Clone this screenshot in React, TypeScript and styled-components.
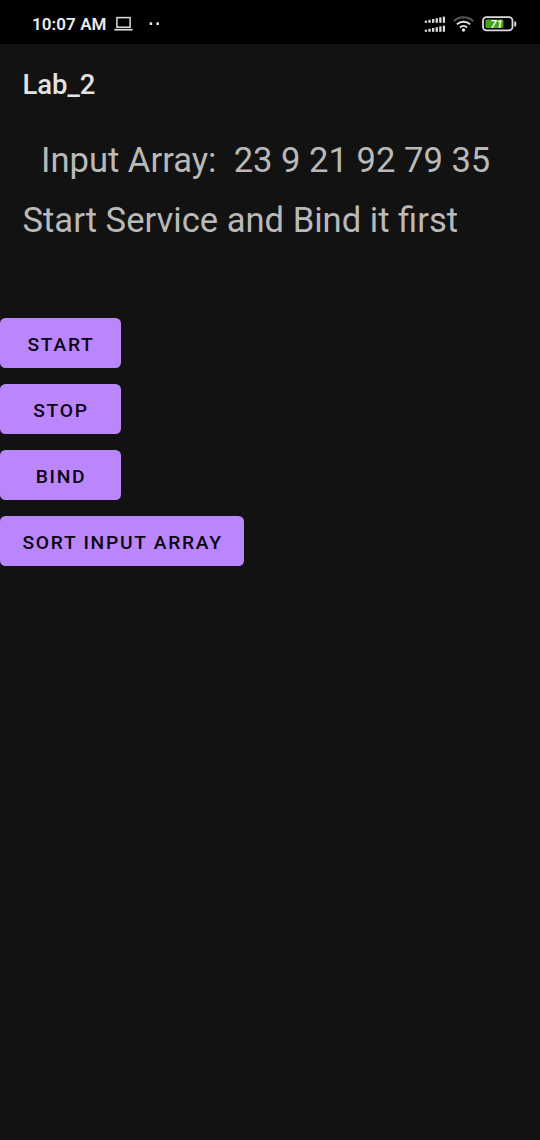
import React from "react";
import styled, { createGlobalStyle } from "styled-components";

const GlobalStyle = createGlobalStyle`
  html, body { margin: 0; background: #121212; }
  body { font-family: Roboto, sans-serif; }
`;

const Screen = styled.div`
  width: 540px;
  height: 1140px;
  overflow: hidden;
  display: flex;
  flex-direction: column;
  background: #121212;
`;

const StatusBar = styled.header`
  box-sizing: border-box;
  height: 44px;
  flex: none;
  display: flex;
  justify-content: space-between;
  padding: 0 23px 0 32px;
  background: #000;
`;

const StatusGroup = styled.div`
  display: flex;
  align-items: center;
  height: 47px;
`;

const Clock = styled.span`
  font-size: 17px;
  font-weight: 600;
  line-height: 20px;
  letter-spacing: 0.08px;
  color: #ececec;
  white-space: nowrap;
  width: 75px;
  margin-top: 1px;
`;

const Icon = styled.svg<{ $gap?: number }>`
  display: block;
  flex: none;
  margin-left: ${(p) => p.$gap ?? 0}px;
`;

const BatteryLevel = styled.text`
  font: italic 600 11px Roboto, sans-serif;
  fill: #fff;
`;

const AppBar = styled.h1`
  margin: 0;
  height: 77px;
  flex: none;
  padding-left: 22.4px;
  font-size: 27.5px;
  font-weight: 500;
  line-height: 81px;
  color: #e2e2e2;
`;

const Line = styled.p<{ $indent: number }>`
  margin: 0;
  height: 60px;
  padding-left: ${(p) => p.$indent}px;
  font-size: 34.6px;
  line-height: 79px;
  color: #b9b9b9;
  white-space: pre;
`;

const Actions = styled.main`
  display: flex;
  flex-direction: column;
  align-items: flex-start;
  gap: 16px;
  padding-top: 77px;
`;

const Button = styled.button`
  box-sizing: border-box;
  min-width: 121px;
  height: 50px;
  padding: 3px 21.5px 0 22.5px;
  border: 0;
  border-radius: 5.5px;
  background: #bb86fc;
  color: #0a0510;
  font: 500 19.25px/22px Roboto, sans-serif;
  letter-spacing: 1.7px;
  text-transform: uppercase;
  white-space: nowrap;
`;

const SIGNAL_BARS = [0, 1, 2, 3, 4, 5];

const LaptopIcon = () => (
  <Icon $gap={7} width="20" height="16" viewBox="0 0 20 16" fill="none" stroke="#dcdcdc">
    <rect x="2.9" y="1.6" width="13.2" height="9.6" strokeWidth="1.5" />
    <path d="M0.4 13.7H18.6" strokeWidth="1.7" />
  </Icon>
);

const DotsIcon = () => (
  <Icon $gap={15} width="12" height="4" viewBox="0 0 12 4" fill="#e4e4e4">
    <rect x="0.6" y="0.3" width="2.6" height="2.6" rx="0.5" />
    <rect x="7.4" y="0.3" width="2.6" height="2.6" rx="0.5" />
  </Icon>
);

const SignalIcon = () => (
  <Icon width="21" height="16" viewBox="0 0 21 16" fill="#dadada">
    {SIGNAL_BARS.map((i) => (
      <React.Fragment key={i}>
        <rect x={0.8 + i * 3.6} y={4.6 - i * 0.8} width="2.3" height={2.2 + i * 0.8} />
        <rect x={0.8 + i * 3.6} y={13.6 - i * 0.8} width="2.3" height={2.2 + i * 0.8} />
      </React.Fragment>
    ))}
  </Icon>
);

const WifiIcon = () => (
  <Icon $gap={8} width="21" height="16" viewBox="0 0 21 16" fill="none" strokeWidth="2">
    <path d="M0.8 5.2C6.2 0 14.8 0 20.2 5.2" stroke="#555" />
    <path d="M3.9 8.4C7.7 4.7 13.3 4.7 17.1 8.4" stroke="#e4e4e4" />
    <path d="M7 11.4C9 9.5 12 9.5 14 11.4" stroke="#e4e4e4" />
    <circle cx="10.5" cy="14" r="1.7" fill="#e4e4e4" />
  </Icon>
);

const BatteryIcon = () => (
  <Icon $gap={8} width="35" height="16" viewBox="0 0 35 16">
    <rect x="1" y="1.2" width="29.5" height="13.2" rx="3.6" fill="none" stroke="#dedede" strokeWidth="1.8" />
    <rect x="3.4" y="3.5" width="18" height="8.6" rx="1.4" fill="#43a619" />
    <path d="M32.3 5.4H33Q34.2 5.4 34.2 6.6V9.2Q34.2 10.4 33 10.4H32.3Z" fill="#dedede" />
    <BatteryLevel x="8.4" y="11.6">71</BatteryLevel>
  </Icon>
);

export default function App() {
  return (
    <>
      <GlobalStyle />
      <Screen>
        <StatusBar>
          <StatusGroup>
            <Clock>10:07 AM</Clock>
            <LaptopIcon />
            <DotsIcon />
          </StatusGroup>
          <StatusGroup>
            <SignalIcon />
            <WifiIcon />
            <BatteryIcon />
          </StatusGroup>
        </StatusBar>
        <AppBar>Lab_2</AppBar>
        <Line $indent={41}>{"Input Array:  23 9 21 92 79 35"}</Line>
        <Line $indent={22.5}>Start Service and Bind it first</Line>
        <Actions>
          <Button>Start</Button>
          <Button>Stop</Button>
          <Button>Bind</Button>
          <Button>Sort input array</Button>
        </Actions>
      </Screen>
    </>
  );
}
